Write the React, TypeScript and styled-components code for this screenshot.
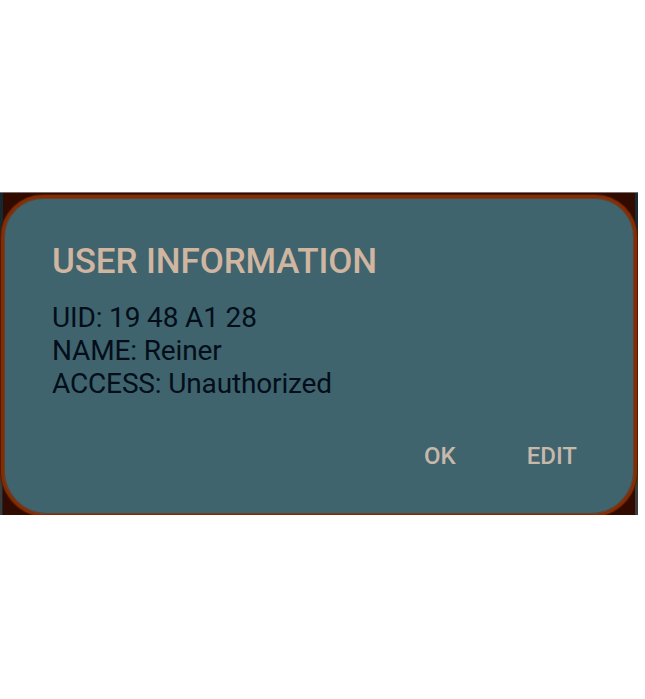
import React from "react";
import styled, { createGlobalStyle } from "styled-components";

const GlobalStyle = createGlobalStyle`
  *, *::before, *::after { box-sizing: border-box; }
  body { margin: 0; background: #ffffff; font-family: Roboto, "Liberation Sans", sans-serif; }
`;

const Page = styled.main`
  width: 645px;
  height: 699px;
  padding-top: 192px;
  background: #ffffff;
  overflow: hidden;
`;

const Backdrop = styled.div`
  width: 638px;
  height: 323px;
  padding: 2px 1px 0;
  overflow: hidden;
  border-top: 1px solid #78706f;
  background:
    linear-gradient(90deg, #3b3b39 0 2px, transparent 2px 635px, #3b3d3e 635px) 0 145px / 100% 100% no-repeat,
    linear-gradient(90deg, #142a30 0 3px, #310b00 3px 635px, #172b34 635px);
`;

const Dialog = styled.section`
  width: 636px;
  height: 322px;
  display: flex;
  flex-direction: column;
  padding: 43px 57px 0 48px;
  border: 3px solid #842c03;
  border-radius: 42px 42px 46px 46px;
  background: #3f646e;
  box-shadow: inset 0 0 0 1px #693f2a, 0 0 1px 1px #541900;
`;

const Title = styled.h1`
  margin: 0;
  font-size: 35px;
  font-weight: 500;
  line-height: 42px;
  letter-spacing: -0.12px;
  color: #d0b5a0;
  white-space: nowrap;
`;

const Details = styled.div`
  margin-top: 18px;
  color: #030e1a;
`;

const Line = styled.p`
  margin: 0;
  font-size: 28px;
  line-height: 33.2px;
  letter-spacing: -0.15px;
  white-space: nowrap;
`;

const Actions = styled.div`
  display: flex;
  justify-content: flex-end;
  gap: 71px;
  margin-top: 40px;
`;

const Action = styled.button`
  padding: 0;
  border: 0;
  background: none;
  font: 500 24px/30px Roboto, "Liberation Sans", sans-serif;
  color: #c7b8aa;
  cursor: pointer;
`;

export default function App() {
  return (
    <Page>
      <GlobalStyle />
      <Backdrop>
        <Dialog role="dialog" aria-labelledby="dialog-title">
          <Title id="dialog-title">USER INFORMATION</Title>
          <Details>
            <Line>UID: 19 48 A1 28</Line>
            <Line>NAME: Reiner</Line>
            <Line>ACCESS: Unauthorized</Line>
          </Details>
          <Actions>
            <Action type="button">OK</Action>
            <Action type="button">EDIT</Action>
          </Actions>
        </Dialog>
      </Backdrop>
    </Page>
  );
}
